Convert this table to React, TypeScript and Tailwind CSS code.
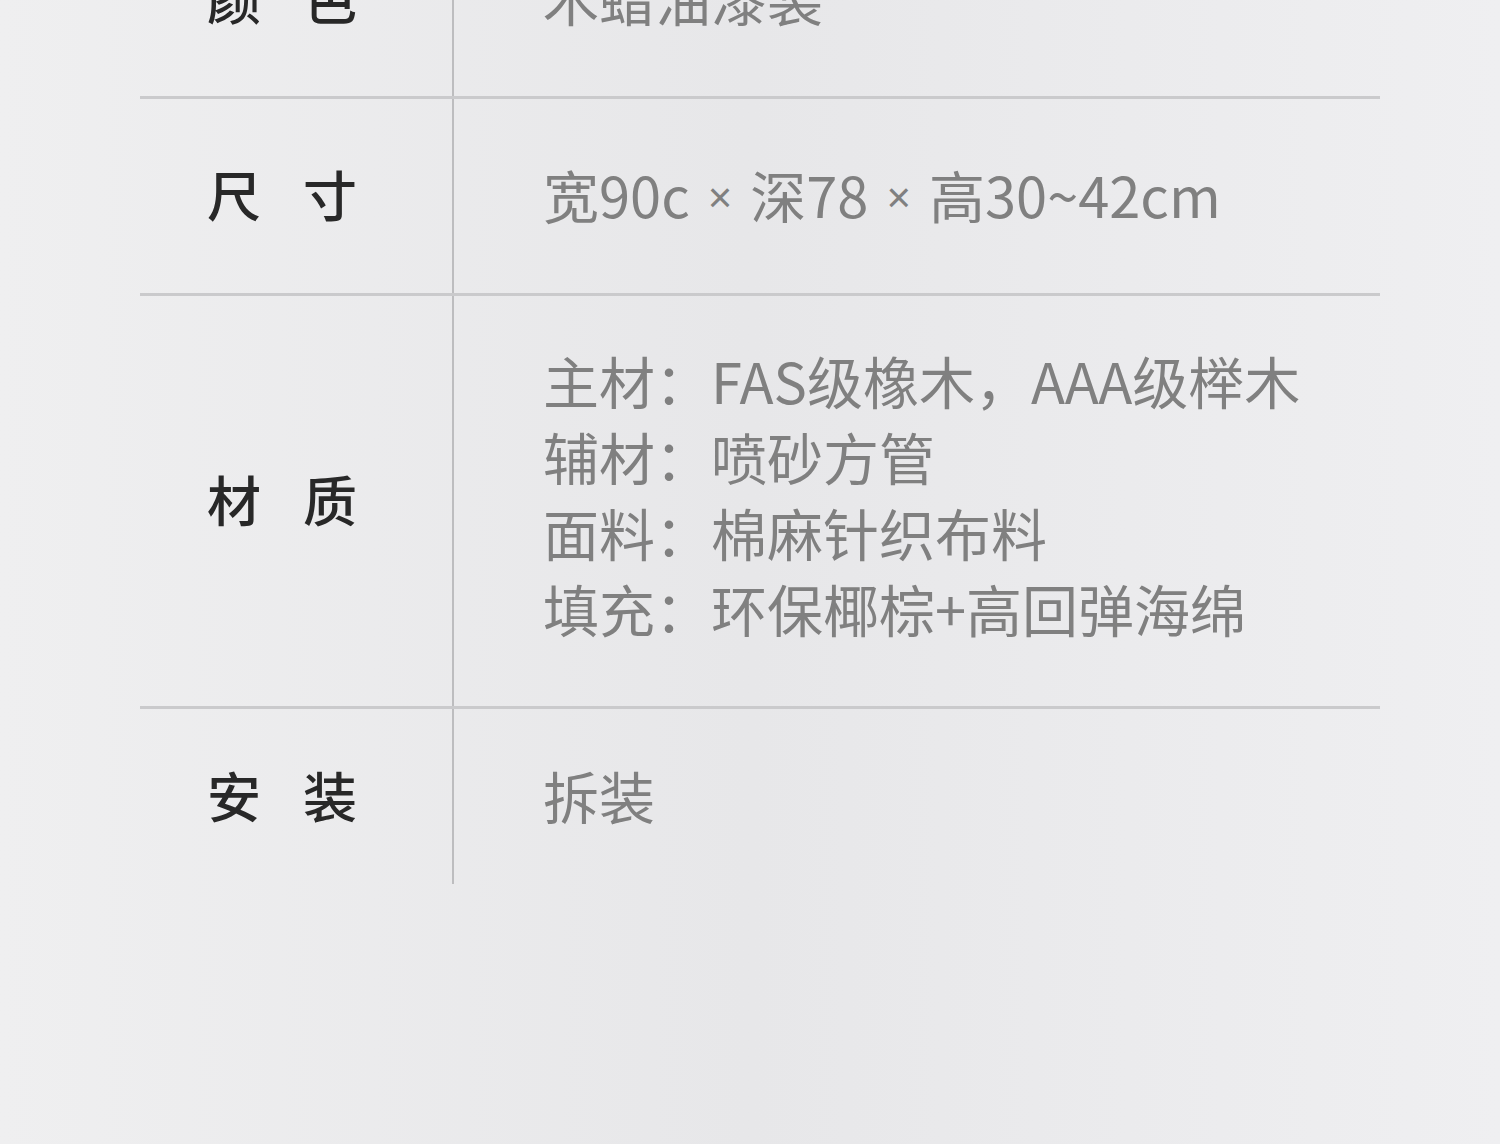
const font = "font-['Noto_Sans_CJK_SC','Noto_Sans',sans-serif]"

type Row = {
  label: [string, string]
  values: React.ReactNode[]
  height: string
  extra?: string
}

function Times() {
  return (
    <span className="mx-[18px] inline-block align-[6px] font-['Liberation_Sans',sans-serif] text-[42px] leading-none">
      ×
    </span>
  )
}

const rows: Row[] = [
  { label: ['颜', '色'], values: ['木蜡油漆装'], height: 'h-[197px]', extra: 'mt-[-98px] border-b-[3px]' },
  {
    label: ['尺', '寸'],
    values: [
      <>
        宽90c<Times />深78<Times />高30~42cm
      </>,
    ],
    height: 'h-[197px]',
    extra: 'border-b-[3px]',
  },
  {
    label: ['材', '质'],
    values: ['主材：FAS级橡木，AAA级榉木', '辅材：喷砂方管', '面料：棉麻针织布料', '填充：环保椰棕+高回弹海绵'],
    height: 'h-[413px]',
    extra: 'border-b-[3px]',
  },
  { label: ['安', '装'], values: ['拆装'], height: 'h-[175px]' },
]

function SpecRow({ row }: { row: Row }) {
  return (
    <div className={`flex ${row.height} border-[#cacacc] ${row.extra ?? ''}`}>
      <div className="flex w-[312px] items-center pb-[4px] pl-[67px]">
        <div className="flex gap-[42px] text-[54px] font-medium leading-none text-[#282828]">
          <span>{row.label[0]}</span>
          <span>{row.label[1]}</span>
        </div>
      </div>
      <div className="flex flex-1 flex-col justify-center border-l-2 border-[#bdbdbf] pl-[89px]">
        <div className={row.values.length > 1 ? 'pb-[14px]' : 'pb-[4px]'}>
          {row.values.map((v, i) => (
            <p key={i} className="h-[76px] whitespace-nowrap text-[56px] leading-[76px] text-[#808080]">
              {v}
            </p>
          ))}
        </div>
      </div>
    </div>
  )
}

export default function App() {
  return (
    <div
      className={`${font} h-[1144px] w-[1500px] overflow-hidden bg-gradient-to-r from-[#efeff0] via-[#e7e7e9] to-[#efeff1]`}
    >
      <div className="ml-[140px] w-[1240px]">
        {rows.map((row) => (
          <SpecRow key={row.label.join('')} row={row} />
        ))}
      </div>
    </div>
  )
}
